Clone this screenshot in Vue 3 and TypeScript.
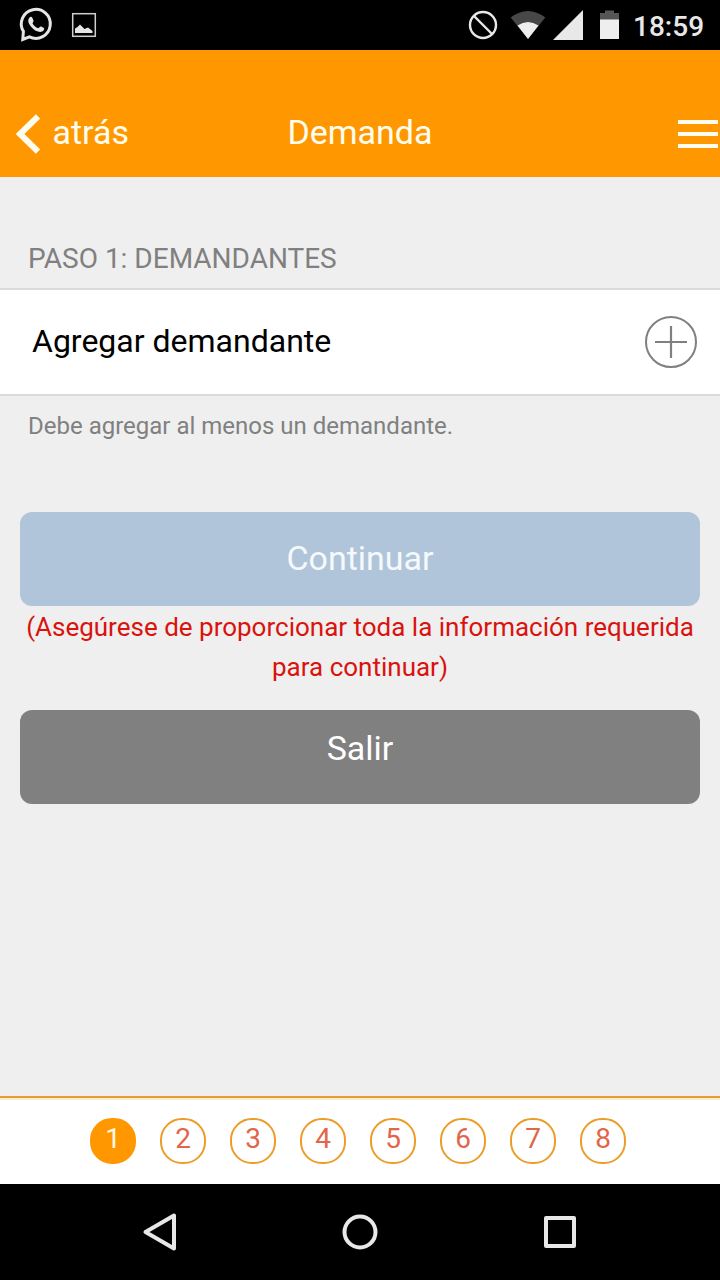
<script setup lang="ts">
import { ref } from 'vue'

const steps: number[] = [1, 2, 3, 4, 5, 6, 7, 8]
const current = ref<number>(1)
</script>

<template>
  <div class="screen">
    <div class="status">
      <svg class="left-icons" width="110" height="50" viewBox="0 0 110 50">
        <path d="M23.4 31.400 A14.500 14.500 0 1 1 29.400 36.900 L22.800 39.400 Z" fill="none" stroke="#e6e6e6" stroke-width="3" stroke-linejoin="miter" />
        <path d="M29.200 18 C30.200 16.600 31.600 16.500 32.300 17.700 L33.500 20.500 C33.800 21.600 32.700 22.400 32.500 23.300 C33.700 25.800 35.600 27.400 38.300 28.300 C39.300 27.700 40 26.100 41.200 26.600 L43.900 28 C44.700 29 43.500 31 42 31.600 C38.800 32.700 34.600 30.600 31.600 27.200 C28.600 23.800 27.200 20.600 29.200 18 Z" fill="#e6e6e6" />
        <rect x="72.7" y="13.7" width="22.6" height="22.6" fill="none" stroke="#cfcfcf" stroke-width="1.5" />
        <path d="M75 33 V28.5 L77.5 27 L80 24.5 L84.5 29 L88 27.5 L92.5 31 V33 Z" fill="#e6e6e6" />
      </svg>
      <div class="right-side">
        <svg width="160" height="50" viewBox="465 0 160 50">
          <circle cx="483" cy="25" r="13" fill="none" stroke="#e8e8e8" stroke-width="2.4" />
          <path d="M474 16 L492 34" stroke="#e8e8e8" stroke-width="2.4" />
          <path d="M528 39 L510.7 17.5 Q528 4.500 545.300 17.500 Z" fill="#484848" />
          <path d="M528 39 L517.500 25.500 Q528 18.500 538.500 25.500 Z" fill="#eee" />
          <path d="M553 40 L583 10 V40 Z" fill="#e8e8e8" />
          <path d="M600 20 V13 H605 V10.500 H614 V13 H619 V20 Z" fill="#555" />
          <rect x="600" y="19.500" width="19" height="19.500" fill="#eee" />
        </svg>
        <span class="clock">18:59</span>
      </div>
    </div>

    <header class="header">
      <div class="back">
        <svg width="25" height="42" viewBox="0 0 25 42">
          <path d="M23 3.500 L5 21 L23 38.500" fill="none" stroke="#fffdf0" stroke-width="6" />
        </svg>
        <span class="back-label">atrás</span>
      </div>
      <h1 class="title">Demanda</h1>
      <div class="menu"><i></i><i></i><i></i></div>
    </header>

    <main class="content">
      <h2 class="section">PASO 1: DEMANDANTES</h2>
      <div class="row">
        <span class="row-label">Agregar demandante</span>
        <svg width="54" height="54" viewBox="0 0 54 54">
          <circle cx="27" cy="27" r="25" fill="none" stroke="#808080" stroke-width="2" />
          <path d="M11 27 H43 M27 11 V43" stroke="#808080" stroke-width="2.200" />
        </svg>
      </div>
      <p class="hint">Debe agregar al menos un demandante.</p>
      <div class="btn continue">Continuar</div>
      <p class="warning">(Asegúrese de proporcionar toda la información requerida<br />para continuar)</p>
      <div class="btn exit">Salir</div>
    </main>

    <footer class="steps">
      <div v-for="n in steps" :key="n" class="step" :class="{ active: n === current }">{{ n }}</div>
    </footer>

    <nav class="nav">
      <svg width="720" height="96" viewBox="0 0 720 96">
        <g fill="none" stroke="#e8e8e8" stroke-width="4" stroke-linejoin="round">
          <path d="M145.500 48 L174 31.500 V64.500 Z" />
          <circle cx="360" cy="48" r="15.500" />
          <rect x="546" y="34" width="28" height="28" />
        </g>
      </svg>
    </nav>
  </div>
</template>

<style>
body { margin: 0; }
</style>

<style scoped>
.screen {
  width: 720px;
  height: 1280px;
  display: flex;
  flex-direction: column;
  overflow: hidden;
  background: #efefef;
  font-family: Roboto, sans-serif;
}
svg { display: block; flex: none; }
h1, h2, p { margin: 0; font-weight: 400; }
.status {
  height: 50px;
  flex: none;
  display: flex;
  justify-content: space-between;
  background: #000;
}
.right-side { display: flex; width: 255px; }
.clock {
  margin-left: 8px;
  font-size: 28px;
  line-height: 53px;
  font-weight: 500;
  color: #e8e8e8;
  white-space: nowrap;
}
.header {
  height: 127px;
  flex: none;
  box-sizing: border-box;
  padding-top: 41px;
  display: grid;
  grid-template-columns: 1fr auto 1fr;
  align-items: center;
  background: #ff9800;
  color: #fffdf0;
}
.back { display: flex; align-items: center; padding-left: 15px; }
.back-label { margin-left: 12.5px; padding-bottom: 4px; font-size: 34px; line-height: 40px; }
.title { padding-bottom: 4px; font-size: 34px; line-height: 40px; }
.menu {
  justify-self: end;
  width: 40px;
  margin-right: 2px;
  display: flex;
  flex-direction: column;
  gap: 8px;
}
.menu i { height: 4px; background: #fffdf0; }
.content { flex: 1; min-height: 0; }
.section {
  height: 111px;
  box-sizing: border-box;
  padding: 65px 28px 0;
  font-size: 28px;
  line-height: 33px;
  color: #808080;
}
.row {
  height: 108px;
  box-sizing: border-box;
  border-top: 2px solid #dadada;
  border-bottom: 2px solid #dadada;
  padding: 0 22px 0 32px;
  display: flex;
  align-items: center;
  justify-content: space-between;
  background: #fff;
}
.row-label { padding-bottom: 2px; font-size: 32px; color: #000; }
.hint {
  padding: 15px 28px 0;
  font-size: 24px;
  line-height: 30px;
  color: #808080;
}
.btn {
  margin: 0 20px;
  height: 94px;
  box-sizing: border-box;
  border-radius: 12px;
  text-align: center;
  font-size: 34px;
  color: #fff;
}
.continue { margin-top: 71px; background: #b0c5d9; line-height: 93px; color: #f6f9fc; }
.warning {
  padding-top: 1px;
  height: 103px;
  font-size: 26px;
  line-height: 40px;
  text-align: center;
  white-space: nowrap;
  color: #d9130d;
}
.exit { background: #808080; line-height: 77px; }
.steps {
  height: 88px;
  flex: none;
  box-sizing: border-box;
  border-top: 2px solid #e99a35;
  box-shadow: inset 0 2px 0 #f9edcf;
  padding: 20px 0 0 90px;
  display: flex;
  gap: 24px;
  background: #fff;
}
.step {
  width: 46px;
  height: 46px;
  box-sizing: border-box;
  border: 2px solid #ec9c27;
  border-radius: 22px;
  text-align: center;
  font-size: 28px;
  line-height: 38px;
  color: #e2664a;
}
.active { background: #ff9800; border-color: #ff9800; color: #fff8e8; }
.nav { height: 96px; flex: none; background: #000; }
</style>
